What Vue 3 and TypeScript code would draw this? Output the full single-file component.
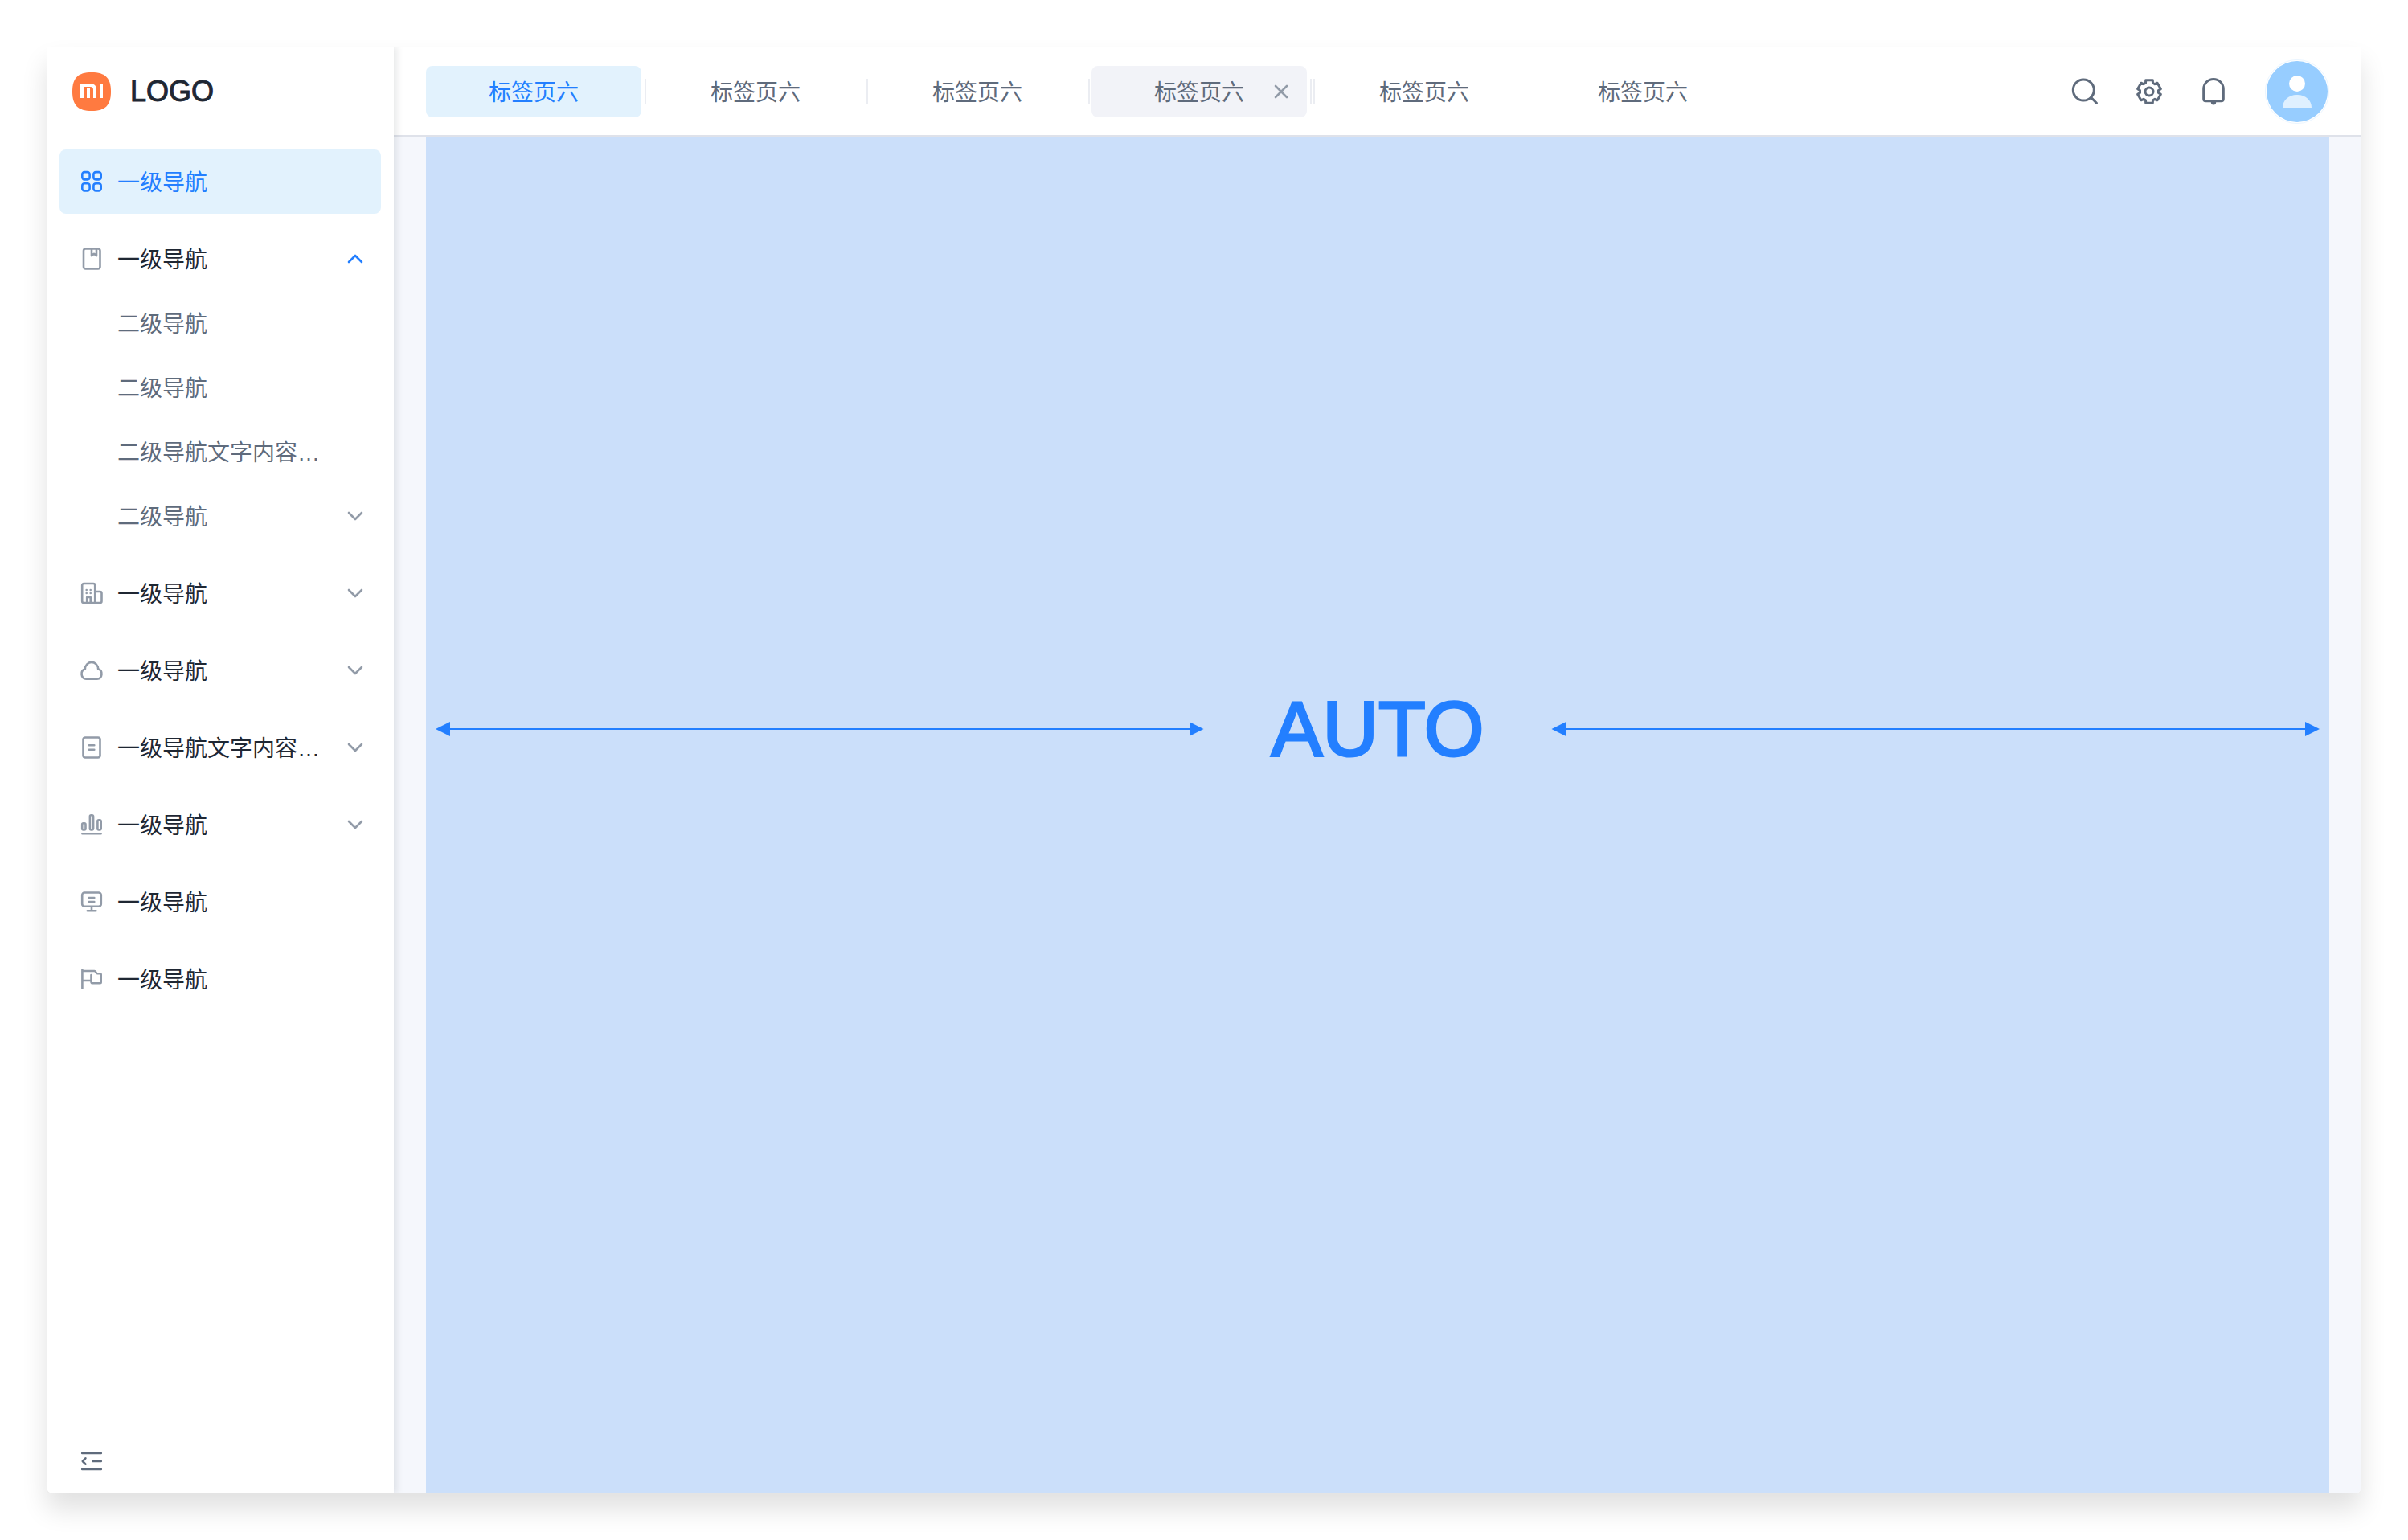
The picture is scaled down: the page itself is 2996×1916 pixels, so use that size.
<script setup lang="ts">
import { ref } from 'vue'

type IconName = 'grid' | 'book' | 'building' | 'cloud' | 'doc' | 'bars' | 'monitor' | 'flag'

interface NavChild {
  label: string
  expandable?: boolean
}

interface NavItem {
  label: string
  icon: IconName
  active?: boolean
  expandable?: boolean
  children?: NavChild[]
}

interface Tab {
  label: string
  active?: boolean
  hovered?: boolean
  dividers: number
}

function roundedBox(x: number, y: number, w: number, h: number, r: number): string {
  return (
    `M${x + r} ${y}h${w - 2 * r}a${r} ${r} 0 0 1 ${r} ${r}v${h - 2 * r}a${r} ${r} 0 0 1 ${-r} ${r}` +
    `h${2 * r - w}a${r} ${r} 0 0 1 ${-r} ${-r}v${2 * r - h}a${r} ${r} 0 0 1 ${r} ${-r}z`
  )
}

const icons: Record<IconName, string> = {
  grid:
    roundedBox(4.3, 4.1, 9.3, 9.3, 2.8) +
    roundedBox(18.4, 4.1, 9.3, 9.3, 2.8) +
    roundedBox(4.3, 18.2, 9.3, 9.3, 2.8) +
    roundedBox(18.4, 18.2, 9.3, 9.3, 2.8),
  book: roundedBox(6, 3.5, 20.5, 25, 2.5) + 'M16 4v8.2l3-2.4 3 2.4V4',
  building:
    'M20.2 28V6a2 2 0 0 0-2-2h-12a2 2 0 0 0-2 2v20a2 2 0 0 0 2 2h20.3a2 2 0 0 0 2-2V16a2 2 0 0 0-2-2h-6.3' +
    'M10.2 27.5V21h4.5v6.5M9.7 12v.01M14.7 12v.01M9.7 16v.01M14.7 16v.01',
  cloud: 'M9.3 26.8A6.5 6.5 0 0 1 7.9 14.2a8.1 8.3 0 0 1 16.2 0A6.5 6.5 0 0 1 22.700 26.8z',
  doc: roundedBox(5.5, 3.5, 21, 25, 2.5) + 'M12.700 13.3h6.600M12.700 18.700h6.600',
  bars:
    roundedBox(4.2, 14.2, 4.3, 8.3, 1.5) +
    roundedBox(13.9, 4.2, 4.2, 18.3, 1.5) +
    roundedBox(23.4, 10.2, 4.3, 12.3, 1.5) +
    'M4.4 27.3h23.2',
  monitor: roundedBox(4.2, 4.5, 23.600, 17.3, 3) + 'M12.700 11h6.600M12.700 16h6.600M16 22v5M10.800 27.3h10.600',
  flag:
    'M4.4 4.5v23.2M4.4 6h15.1c2 0 1.7 3.3 3.8 3.3h3.2q1.2 0 1.2 1.2v9.600q0 1.2-1.2 1.2h-9.200q-1.800 0-1.800-1.800V11M4.4 18h11',
}

const navItems: NavItem[] = [
  { label: '一级导航', icon: 'grid', active: true },
  {
    label: '一级导航',
    icon: 'book',
    expandable: true,
    children: [
      { label: '二级导航' },
      { label: '二级导航' },
      { label: '二级导航文字内容…' },
      { label: '二级导航', expandable: true },
    ],
  },
  { label: '一级导航', icon: 'building', expandable: true },
  { label: '一级导航', icon: 'cloud', expandable: true },
  { label: '一级导航文字内容…', icon: 'doc', expandable: true },
  { label: '一级导航', icon: 'bars', expandable: true },
  { label: '一级导航', icon: 'monitor' },
  { label: '一级导航', icon: 'flag' },
]

const tabs: Tab[] = [
  { label: '标签页六', active: true, dividers: 1 },
  { label: '标签页六', dividers: 1 },
  { label: '标签页六', dividers: 1 },
  { label: '标签页六', hovered: true, dividers: 2 },
  { label: '标签页六', dividers: 0 },
  { label: '标签页六', dividers: 0 },
]

const openIndex = ref(1)

function toggle(index: number) {
  openIndex.value = openIndex.value === index ? -1 : index
}

// Outline of a six-toothed cog around (24, 24).
function cogPath(): string {
  const points: string[] = []
  for (let tooth = 0; tooth < 6; tooth++) {
    for (const [offset, radius] of [[-23, 11.6], [-17, 14.8], [17, 14.8], [23, 11.6]]) {
      const angle = ((tooth * 60 + offset - 90) * Math.PI) / 180
      points.push(`${(24 + radius * Math.cos(angle)).toFixed(1)} ${(24 + radius * Math.sin(angle)).toFixed(1)}`)
    }
  }
  return `M${points.join('L')}Z`
}
</script>

<template>
  <div class="page" lang="zh-CN">
    <div class="window">
      <aside class="sidebar">
        <a class="brand" href="#">
          <svg class="brand-mark" viewBox="0 0 48 48" aria-hidden="true">
            <path d="M24 0C41 0 48 7 48 24S41 48 24 48 0 41 0 24 7 0 24 0z" fill="#ff7a40" />
            <path d="M12 32V16h10.500q5.500 0 5.500 5.500V32M36 14v18M20 20v12" fill="none" stroke="#fff" stroke-width="4" />
          </svg>
          <span class="brand-name">LOGO</span>
        </a>

        <nav class="nav" aria-label="主导航">
          <div v-for="(item, index) in navItems" :key="index">
            <component
              :is="item.expandable ? 'button' : 'a'"
              :href="item.expandable ? undefined : '#'"
              :type="item.expandable ? 'button' : undefined"
              :aria-expanded="item.expandable ? openIndex === index : undefined"
              class="nav-item"
              :class="{ active: item.active, open: openIndex === index }"
              @click="item.expandable && toggle(index)"
            >
              <svg class="nav-icon" viewBox="0 0 32 32" aria-hidden="true"><path :d="icons[item.icon]" /></svg>
              <span class="nav-label">{{ item.label }}</span>
              <svg v-if="item.expandable" class="chevron" viewBox="0 0 24 24" aria-hidden="true">
                <path d="M4 8l8 8 8-8" />
              </svg>
            </component>
            <template v-if="item.children && openIndex === index">
              <component
                :is="child.expandable ? 'button' : 'a'"
                v-for="(child, childIndex) in item.children"
                :key="childIndex"
                :href="child.expandable ? undefined : '#'"
                :type="child.expandable ? 'button' : undefined"
                class="nav-item sub"
              >
                <span class="nav-label">{{ child.label }}</span>
                <svg v-if="child.expandable" class="chevron" viewBox="0 0 24 24" aria-hidden="true">
                  <path d="M4 8l8 8 8-8" />
                </svg>
              </component>
            </template>
          </div>
        </nav>

        <button class="collapse" type="button" aria-label="收起导航">
          <svg viewBox="0 0 32 32" aria-hidden="true">
            <path d="M4.200 6h23.600M17.400 16h10.400M4.200 26h23.600M8.400 12.300L4.800 16l3.600 3.700" />
          </svg>
        </button>
      </aside>

      <div class="main">
        <header class="topbar">
          <div class="tabs">
            <template v-for="(tab, index) in tabs" :key="index">
              <div class="tab" :class="{ active: tab.active, hovered: tab.hovered }">
                <button class="tab-label" type="button">{{ tab.label }}</button>
                <button v-if="tab.hovered" class="tab-close" type="button" aria-label="关闭标签页">
                  <svg viewBox="0 0 24 24" aria-hidden="true"><path d="M5 5l14 14M19 5L5 19" /></svg>
                </button>
              </div>
              <span v-for="n in tab.dividers" :key="n" class="divider"></span>
            </template>
          </div>

          <div class="tools">
            <button class="tool" type="button" aria-label="搜索">
              <svg viewBox="0 0 48 48" aria-hidden="true">
                <circle cx="22.300" cy="22" r="13" />
                <path d="M31.700 31.400l6.800 6.800" />
              </svg>
            </button>
            <button class="tool" type="button" aria-label="设置">
              <svg viewBox="0 0 48 48" aria-hidden="true">
                <path :d="cogPath()" />
                <circle cx="24" cy="24" r="5" />
              </svg>
            </button>
            <button class="tool" type="button" aria-label="通知">
              <svg viewBox="0 0 48 48" aria-hidden="true">
                <path d="M11.700 33V20.700a12.300 12.300 0 0 1 24.600 0V33q0 2.800-2.800 2.800H14.500q-2.800 0-2.800-2.800z" />
                <path class="solid" d="M20.800 37h6.400a3.200 3.600 0 0 1-6.400 0z" />
              </svg>
            </button>
            <button class="avatar" type="button" aria-label="账户">
              <svg viewBox="0 0 80 80" aria-hidden="true">
                <circle cx="40" cy="40" r="39.600" fill="#fff" stroke="#e4f2ff" stroke-width=".8" />
                <circle cx="40" cy="40" r="38" fill="#97cdff" />
                <circle cx="40" cy="30" r="10" fill="#fff" />
                <path d="M22 60c0-9 7-16 18-16s18 7 18 16z" fill="#dff0ff" />
              </svg>
            </button>
          </div>
        </header>

        <main class="content">
          <div class="canvas">
            <div class="measure">
              <span class="arrow"></span>
              <span class="measure-label">AUTO</span>
              <span class="arrow"></span>
            </div>
          </div>
        </main>
      </div>
    </div>
  </div>
</template>

<style>
body {
  background: #fff;
}
</style>

<style scoped>
.page {
  box-sizing: border-box;
  display: flex;
  min-height: 100vh;
  padding: 58px;
  font-family: 'Liberation Sans', 'Noto Sans CJK SC', sans-serif;
  font-size: 28px;
  line-height: 40px;
  color: #1f2733;
}

.page * {
  box-sizing: border-box;
}

a {
  color: inherit;
  text-decoration: none;
}

button {
  padding: 0;
  border: 0;
  background: none;
  color: inherit;
  font: inherit;
  cursor: pointer;
}

svg {
  display: block;
  flex: none;
}

.window {
  display: flex;
  flex: 1;
  min-width: 0;
  border-radius: 0 0 8px 8px;
  background: #fff;
  box-shadow: 0 20px 32px rgba(0, 0, 0, 0.12);
}

.sidebar {
  z-index: 1;
  display: flex;
  flex: none;
  flex-direction: column;
  width: 432px;
  padding: 0 16px 24px;
  border-radius: 0 0 0 8px;
  background: #fff;
  box-shadow: 4px 0 8px rgba(31, 39, 51, 0.1);
  clip-path: inset(0 -16px 0 0);
}

.brand {
  display: flex;
  align-items: center;
  gap: 24px;
  height: 112px;
  padding: 0 16px;
  font-size: 36px;
}

.brand-name {
  -webkit-text-stroke: 1px currentColor;
}

.brand-mark {
  width: 48px;
  height: 48px;
}

.nav {
  display: flex;
  flex: 1;
  flex-direction: column;
  gap: 16px;
  padding-top: 16px;
}

.nav-item {
  display: flex;
  align-items: center;
  gap: 16px;
  width: 100%;
  height: 80px;
  padding: 0 20px 0 24px;
  border-radius: 8px;
  text-align: left;
}

.nav-item.active {
  background: #e2f2fd;
  color: #237fff;
}

.nav-item.sub {
  padding-left: 72px;
  color: #5f6b7c;
}

.nav-label {
  flex: 1;
  padding-top: 3px;
  overflow: hidden;
  white-space: nowrap;
}

.nav-icon,
.collapse svg {
  width: 32px;
  height: 32px;
  fill: none;
  stroke: #929ba8;
  stroke-width: 2.6;
  stroke-linecap: round;
  stroke-linejoin: round;
}

.active .nav-icon {
  stroke: #237fff;
}

.chevron {
  width: 24px;
  height: 24px;
  fill: none;
  stroke: #929ba8;
  stroke-width: 2.6;
  stroke-linecap: round;
  stroke-linejoin: round;
}

.open .chevron {
  stroke: #237fff;
  transform: rotate(180deg);
}

.collapse {
  align-self: flex-start;
  margin-left: 24px;
}

.collapse svg {
  stroke: #5f6b7c;
}

.main {
  display: flex;
  flex: 1;
  flex-direction: column;
  min-width: 0;
}

.topbar {
  display: flex;
  align-items: center;
  justify-content: space-between;
  height: 112px;
  padding: 0 40px;
  border-bottom: 2px solid #dfe2ea;
}

.tabs {
  display: flex;
  align-items: center;
  gap: 2px;
  padding-top: 2px;
}

.tab {
  display: grid;
  grid-template-columns: 1fr auto 1fr;
  align-items: center;
  width: 268px;
  height: 64px;
  margin-right: 2px;
  border-radius: 8px;
  color: #5f6b7c;
}

.tab.active {
  background: #e2f2fd;
  color: #237fff;
}

.tab.hovered {
  background: #f2f3f8;
}

.tab-label {
  grid-column: 2;
  padding-top: 3px;
}

.tab-close {
  grid-column: 3;
  justify-self: end;
  margin-right: 20px;
}

.tab-close svg {
  width: 24px;
  height: 24px;
  fill: none;
  stroke: #929ba8;
  stroke-width: 2.6;
  stroke-linecap: round;
}

.divider {
  width: 2px;
  height: 32px;
  background: #ebedf2;
}

.tools {
  display: flex;
  align-items: center;
  gap: 32px;
  padding-top: 2px;
}

.tool svg {
  width: 48px;
  height: 48px;
  fill: none;
  stroke: #5f6b7c;
  stroke-width: 3;
  stroke-linecap: round;
  stroke-linejoin: round;
}

.tool .solid {
  fill: #5f6b7c;
  stroke: none;
}

.avatar {
  margin-left: 8px;
}

.avatar svg {
  width: 80px;
  height: 80px;
}

.content {
  display: flex;
  flex: 1;
  padding: 0 40px;
  border-radius: 0 0 8px 0;
  background: #f5f7fc;
}

.canvas {
  flex: 1;
  padding: 681px 12px 0;
  background: #cbdffa;
  color: #237fff;
}

.measure {
  display: flex;
  align-items: center;
  gap: 84px;
}

.measure-label {
  font-size: 96px;
  line-height: 112px;
  -webkit-text-stroke: 3px currentColor;
}

.arrow {
  display: flex;
  flex: 1;
  align-items: center;
  justify-content: space-between;
  background: linear-gradient(currentColor, currentColor) center / calc(100% - 34px) 2px no-repeat;
}

.arrow::before,
.arrow::after {
  flex: none;
  width: 18px;
  height: 18px;
  background: currentColor;
  clip-path: polygon(0 50%, 100% 0, 100% 100%);
  content: '';
}

.arrow::after {
  clip-path: polygon(0 0, 100% 50%, 0 100%);
}
</style>
